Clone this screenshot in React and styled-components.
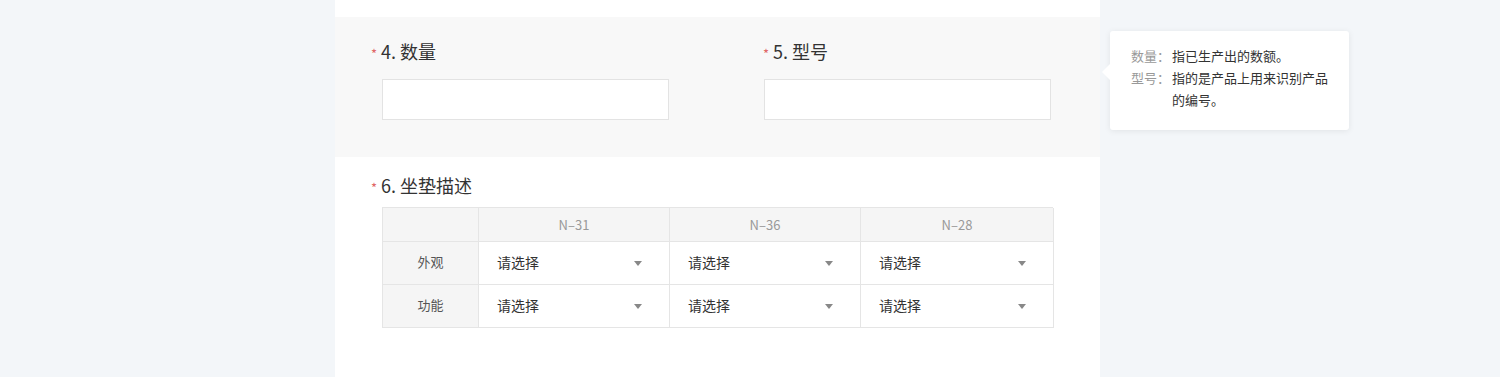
import React from "react";
import styled, { createGlobalStyle } from "styled-components";

const Global = createGlobalStyle`
  html, body { margin: 0; padding: 0; }
  body {
    background: #f3f6f9;
    font-family: "Noto Sans CJK SC", "Microsoft YaHei", sans-serif;
    color: #333;
  }
`;

const Page = styled.div`
  height: 377px;
  overflow: hidden;
  padding-left: 335px;
`;

const Main = styled.div`
  position: relative;
  width: 765px;
  height: 377px;
  background: #fff;
  padding-top: 17px;
  box-sizing: border-box;
`;

const Section = styled.div`
  background: ${(p) => (p.$shaded ? "#f8f8f8" : "#fff")};
  height: ${(p) => p.$h}px;
  box-sizing: border-box;
  padding: ${(p) => p.$pt}px 0 0 46px;
  display: ${(p) => (p.$grid ? "grid" : "block")};
  grid-template-columns: 392px 392px;
`;

const Field = styled.div`
  display: flex;
  flex-direction: column;
`;

const Label = styled.div`
  display: flex;
  align-items: center;
  height: 24px;
  font-size: 18px;
  line-height: 24px;
  color: #333;
`;

const Star = styled.span`
  width: 10px;
  margin-left: -10px;
  color: #e06666;
  font-size: 13px;
  line-height: 12px;
  position: relative;
  top: 3px;
`;

const Input = styled.div`
  margin: 16px 0 0 ${(p) => p.$ml}px;
  width: 287px;
  height: 41px;
  box-sizing: border-box;
  border: 1px solid #e3e3e3;
  background: #fff;
`;

const Table = styled.div`
  margin: 10px 0 0 1px;
  width: 671px;
  display: grid;
  grid-template-columns: 96px 191px 191px 193px;
  border-top: 1px solid #e5e5e5;
  border-left: 1px solid #e5e5e5;
  box-sizing: border-box;
`;

const Cell = styled.div`
  box-sizing: border-box;
  height: ${(p) => (p.$head ? 34 : 43)}px;
  border-right: 1px solid #e5e5e5;
  border-bottom: 1px solid #e5e5e5;
  background: ${(p) => (p.$shade ? "#f5f5f5" : "#fff")};
  display: flex;
  align-items: center;
  justify-content: ${(p) => (p.$select ? "space-between" : "center")};
  padding: ${(p) => (p.$select ? "0 27px 3px 18px" : p.$head ? "0" : "0 0 3px")};
  font-size: ${(p) => (p.$head ? 13 : p.$select ? 14 : 13)}px;
  color: ${(p) => (p.$head ? "#999" : p.$select ? "#333" : "#555")};
`;

const Caret = styled.span`
  width: 0;
  height: 0;
  margin-top: 3px;
  border-left: 4px solid transparent;
  border-right: 4px solid transparent;
  border-top: 5px solid #888;
`;

const Tip = styled.div`
  position: absolute;
  left: 775px;
  top: 31px;
  width: 239px;
  height: 99px;
  box-sizing: border-box;
  background: #fff;
  border-radius: 3px;
  box-shadow: 0 1px 6px rgba(0, 0, 0, 0.08);
  padding: 14px 12px 0 21px;
  font-size: 13px;
  line-height: 22px;
  &::before {
    content: "";
    position: absolute;
    left: -8px;
    top: 33px;
    border-top: 8px solid transparent;
    border-bottom: 8px solid transparent;
    border-right: 8px solid #fff;
  }
`;

const TipRow = styled.div`
  display: flex;
`;

const TipKey = styled.span`
  flex: 0 0 41px;
  color: #999;
`;

const TipVal = styled.span`
  color: #333;
`;

const cols = ["N–31", "N–36", "N–28"];
const rows = ["外观", "功能"];

export default function App() {
  return (
    <Page>
      <Global />
      <Main>
        <Section $shaded $grid $h={140} $pt={22}>
          <Field>
            <Label><Star>*</Star>4. 数量</Label>
            <Input $ml={1} />
          </Field>
          <Field>
            <Label><Star>*</Star>5. 型号</Label>
            <Input $ml={-9} />
          </Field>
        </Section>
        <Section $h={220} $pt={16}>
          <Label><Star>*</Star>6. 坐垫描述</Label>
          <Table>
            <Cell $head $shade />
            {cols.map((c) => (
              <Cell key={c} $head $shade>{c}</Cell>
            ))}
            {rows.map((r) => (
              <React.Fragment key={r}>
                <Cell $shade>{r}</Cell>
                {cols.map((c) => (
                  <Cell key={c} $select>
                    请选择
                    <Caret />
                  </Cell>
                ))}
              </React.Fragment>
            ))}
          </Table>
        </Section>
        <Tip>
          <TipRow><TipKey>数量：</TipKey><TipVal>指已生产出的数额。</TipVal></TipRow>
          <TipRow><TipKey>型号：</TipKey><TipVal>指的是产品上用来识别产品的编号。</TipVal></TipRow>
        </Tip>
      </Main>
    </Page>
  );
}
